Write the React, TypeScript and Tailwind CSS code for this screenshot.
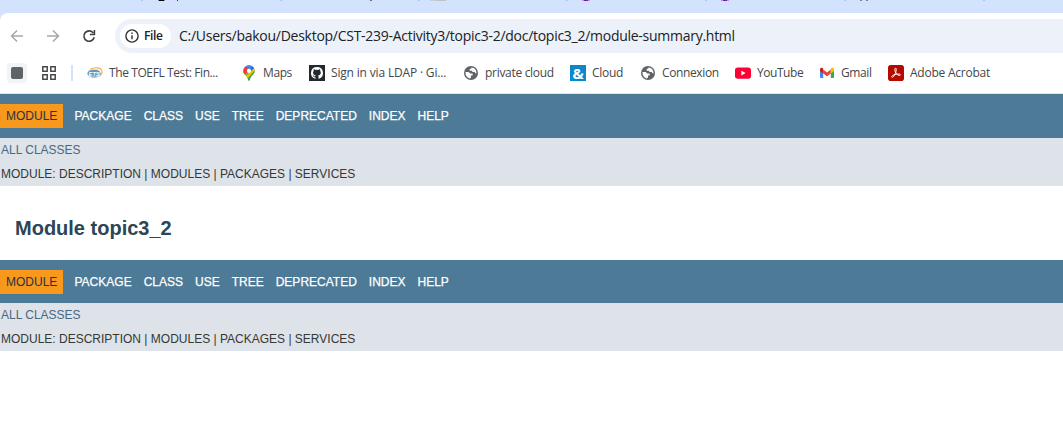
import type { ReactNode } from "react";

const ui = "font-['Open_Sans','Noto_Sans',sans-serif]";

function TabStrip() {
  const marks: [number, number, string][] = [
    [141, 2, "#a8c7fa"], [158, 1, "#8a93a5"], [159, 5, "#000"], [164, 1, "#8a93a5"], [177, 1, "#30343c"],
    [280, 2, "#a8c7fa"], [370, 2, "#6b7078"], [418, 2, "#a8c7fa"], [430, 7, "#c6cedd"], [437, 9, "#bfc1c8"],
    [566, 2, "#a8c7fa"], [582, 2, "#b49bdc"], [584, 4, "#6a1fa8"], [588, 2, "#b49bdc"],
    [705, 2, "#a8c7fa"], [721, 2, "#b49bdc"], [723, 4, "#6a1fa8"], [727, 2, "#b49bdc"],
    [844, 2, "#a8c7fa"], [860, 2, "#7b828e"], [866, 2, "#7b828e"], [983, 2, "#a8c7fa"],
  ];
  return (
    <div className="h-[13px] bg-[#d3e3fd]">
      <svg width="1063" height="1" className="block" shapeRendering="crispEdges">
        {marks.map(([x, w, c]) => <rect key={x} x={x} y="0" width={w} height="1" fill={c} />)}
      </svg>
    </div>
  );
}

function Arrow({ flip = false }: { flip?: boolean }) {
  return (
    <svg width="14" height="14" viewBox="0 0 14 14" fill="none" stroke="#a5a7a9" strokeWidth="1.5" className={flip ? "rotate-180" : ""}>
      <path d="M13 7H1.7M7 1.5 1.5 7 7 12.5" />
    </svg>
  );
}

function Toolbar() {
  return (
    <div className="flex h-[46px] items-center rounded-tl-lg bg-white pl-[10px]">
      <Arrow />
      <div className="ml-[22px] flex"><Arrow flip /></div>
      <svg width="14" height="14" viewBox="0 0 14 14" fill="none" stroke="#3f4144" strokeWidth="1.6" className="ml-[22px]">
        <path d="M11.4 4.1A5.2 5.2 0 1 0 12.2 8.2" />
        <path d="M12.4 1v4.5H7.9" />
      </svg>
      <div className="ml-[19px] flex h-[34px] flex-1 items-center rounded-l-full bg-[#ecf1fa] pl-[5px]">
        <div className="flex h-6 w-[51px] shrink-0 items-center rounded-full bg-white pl-[5px]">
          <svg width="14" height="14" viewBox="0 0 14 14" fill="none" stroke="#303134" strokeWidth="1.4" className="shrink-0">
            <circle cx="7" cy="7" r="6.1" />
            <path d="M7 6.2v4M7 3.6V5" />
          </svg>
          <span className={`${ui} ml-[5px] text-[12px] font-semibold leading-4 tracking-[-0.35px] text-[#202124]`}>File</span>
        </div>
        <span className={`${ui} ml-2 whitespace-nowrap text-[14px] leading-5 tracking-[-0.27px] text-[#202124]`}>
          C:/Users/bakou/Desktop/CST-239-Activity3/topic3-2/doc/topic3_2/module-summary.html
        </span>
      </div>
    </div>
  );
}

const Ets = () => (
  <svg width="16" height="16" viewBox="0 0 16 16">
    <path d="M3 4.5C7 1.8 15 2 15 7c0 2-1.5 3.5-3 4.2" fill="none" stroke="#f4b23c" strokeWidth="1.1" />
    <ellipse cx="7" cy="8.4" rx="6.6" ry="4.5" fill="#5b97c1" />
    <path d="M1 6.2C4 4 10 3.8 13 6M2 11c3 1.6 8 1.6 11-.3" fill="none" stroke="#d9e9f3" strokeWidth="1" />
    <text x="1.6" y="10.5" fontFamily="Liberation Sans" fontSize="5.8" fontWeight="bold" fontStyle="italic" fill="#fff">ETS</text>
  </svg>
);

const MapsPin = () => (
  <svg width="12" height="16" viewBox="0 0 12 16">
    <defs><clipPath id="pin"><path d="M6 .2A5.7 5.7 0 0 0 .3 6c0 3.8 4.3 4.8 4.9 9.2q.8 1.2 1.6 0C7.4 10.8 11.7 9.8 11.7 6A5.7 5.7 0 0 0 6 .2" /></clipPath></defs>
    <g clipPath="url(#pin)">
      <path d="M0 0h12v16H0z" fill="#34a853" />
      <path d="M0 12V4l6 2-4 5z" fill="#fbbc04" />
      <path d="M2 12 12 1v4L5 13z" fill="#fbbc04" />
      <path d="M0 1h4l2.5 4L2.2 9.8 0 8z" fill="#ea4335" />
      <path d="M2 0h10v2.4L7 6z" fill="#4285f4" />
      <path d="m12 1.8-4.6 5L6 5.4 9.6 1z" fill="#1a73e8" />
    </g>
    <circle cx="6" cy="5.8" r="2.1" fill="#fff" />
  </svg>
);

const Github = () => (
  <svg width="16" height="16" viewBox="0 0 16 16">
    <rect width="16" height="16" fill="#24292e" />
    <path d="M8 2a6 6 0 0 0-1.9 11.7c.3.1.4-.1.4-.3v-1.2c-1.7.4-2-.7-2-.7-.3-.7-.7-.9-.7-.9-.5-.4 0-.4 0-.4.6 0 .9.6.9.6.5.9 1.4.7 1.8.5 0-.4.2-.7.4-.8-1.4-.2-2.8-.7-2.8-3 0-.6.2-1.2.6-1.6 0-.2-.3-.8.1-1.6 0 0 .5-.2 1.6.6a6 6 0 0 1 3 0c1.200-.8 1.700-.6 1.700-.6.3.8.1 1.400 0 1.600.4.4.7 1 .7 1.600 0 2.300-1.400 2.800-2.800 3 .3.2.5.6.5 1.200v1.700c0 .2.1.4.4.3A6 6 0 0 0 8 2" fill="#fff" />
  </svg>
);

const Globe = () => (
  <svg width="14" height="14" viewBox="0 0 14 14">
    <circle cx="7" cy="7" r="7" fill="#5f6368" />
    <path d="M1.5 6.1h3.2l1.5 1.3h2.4v2H7v2.1L5.8 12.4C3.3 12 1.5 9.8 1.5 7zM7.3 1.5v1.3H5.7v1.9h2.1l.8 1.4h2.1l.7 1.2h1.1C12.7 4.3 10.7 1.5 7.3 1.5" fill="#fff" />
  </svg>
);

const Ampersand = () => (
  <div className="flex size-4 shrink-0 items-center justify-center bg-[#0b87cc]">
    <span className={`${ui} text-[15px] font-bold leading-4 text-white`}>&amp;</span>
  </div>
);

const Youtube = () => (
  <svg width="16" height="16" viewBox="0 0 16 16">
    <rect y="2.4" width="16" height="11.4" rx="2.8" fill="#ff0033" />
    <path d="m6.4 5.7 4.2 2.4-4.2 2.4z" fill="#fff" />
  </svg>
);

const Gmail = () => (
  <svg width="14" height="12" viewBox="0 0 14 12">
    <path d="M0 2.5 3.2 4v7H1a1 1 0 0 1-1-1z" fill="#4285f4" />
    <path d="M14 2.5 10.8 4v7H13a1 1 0 0 0 1-1z" fill="#34a853" />
    <path d="M3.2 2.6 7 5.4l3.8-2.8v3.9L7 9.3 3.2 6.5z" fill="#ea4335" />
    <path d="M0 2.3C0 .8 1.5.4 2.5 1l.7.6v4.9L0 4.1z" fill="#c5221f" />
    <path d="M14 2.3c0-1.5-1.5-1.9-2.5-1.3l-.7.6v4.9L14 4.1z" fill="#fbbc04" />
  </svg>
);

const Acrobat = () => (
  <svg width="16" height="16" viewBox="0 0 16 16">
    <rect width="16" height="16" rx="2.8" fill="#b30b00" />
    <path d="M7.4 3.2c1.1-.3 1 1.8.6 3.3-.6 2.1-2.2 5.6-3.5 5.8-1 .1-1.1-1 .2-1.8 1.7-1.1 4.8-1.7 6.7-1.4 1.3.2 1.2 1.4.1 1.4C9.4 10.5 7 7.5 6.8 4.9 6.7 4 6.9 3.4 7.4 3.2Z" fill="none" stroke="#fff" strokeWidth=".95" />
  </svg>
);

function Bookmark({ icon, label, className, text }: { icon: ReactNode; label: string; className: string; text: string }) {
  return (
    <div className={`flex shrink-0 items-center ${className}`}>
      {icon}
      <span className={`${ui} whitespace-nowrap text-[12px] leading-4 text-[#45474a] ${text}`}>{label}</span>
    </div>
  );
}

function Bookmarks() {
  return (
    <div className="flex h-[35px] items-center border-b border-[#dfe3e8] bg-white pb-[6px] pl-[7px]">
      <div className="flex size-5 items-center justify-center rounded bg-[#f1f3f4]"><div className="size-3 rounded-[2px] bg-[#5f6368]" /></div>
      <svg width="14" height="14" viewBox="0 0 14 14" fill="none" stroke="#47494d" strokeWidth="1.5" className="ml-[15px]">
        <path d="M.8.8h4.4v4.4H.8zM8.8.8h4.4v4.4H8.8zM.8 8.8h4.4v4.4H.8zM8.8 8.8h4.4v4.4H8.8z" />
      </svg>
      <div className="ml-[15px] mr-[14px] h-4 w-[2px] bg-[#d3e3fd]" />
      <Bookmark icon={<Ets />} label="The TOEFL Test: Fin..." className="w-[156px]" text="ml-[6px] tracking-[-0.4px]" />
      <Bookmark icon={<MapsPin />} label="Maps" className="w-[66px]" text="ml-2 tracking-[-0.4px]" />
      <Bookmark icon={<Github />} label="Sign in via LDAP · Gi..." className="w-[155px]" text="ml-[6px] tracking-[-0.17px]" />
      <Bookmark icon={<Globe />} label="private cloud" className="w-[106px]" text="ml-[7px] tracking-[-0.3px]" />
      <Bookmark icon={<Ampersand />} label="Cloud" className="w-[71px]" text="ml-[6px] tracking-[-0.3px]" />
      <Bookmark icon={<Globe />} label="Connexion" className="w-[94px]" text="ml-[7px] tracking-[-0.38px]" />
      <Bookmark icon={<Youtube />} label="YouTube" className="w-[85px]" text="ml-[6px] tracking-[-0.45px]" />
      <Bookmark icon={<Gmail />} label="Gmail" className="w-[68px]" text="ml-[7px] tracking-[-0.38px]" />
      <Bookmark icon={<Acrobat />} label="Adobe Acrobat" className="" text="ml-[6px] tracking-[-0.23px]" />
    </div>
  );
}

function DocNav({ height }: { height: string }) {
  return (
    <nav className="text-[12px] leading-[14px]">
      <div className={`flex items-start bg-[#4d7a97] pt-[10px] text-white ${height}`}>
        <span className="mr-[11.5px] h-6 w-[63px] bg-[#f8981d] pl-[6px] pt-[5px] text-[#253441]">MODULE</span>
        <div className="flex gap-3 pt-[5px] [-webkit-text-stroke:0.25px_white]">
          {["PACKAGE", "CLASS", "USE", "TREE", "DEPRECATED", "INDEX", "HELP"].map((s) => <a key={s}>{s}</a>)}
        </div>
      </div>
      <div className="h-12 bg-[#dee3e9] pl-px pt-[5px]">
        <div className="text-[#4a6782]">ALL CLASSES</div>
        <div className="mt-[10px] text-[#353833]">MODULE: DESCRIPTION | MODULES | PACKAGES | SERVICES</div>
      </div>
    </nav>
  );
}

export default function App() {
  return (
    <div className="h-[427px] overflow-hidden bg-white font-['Liberation_Sans',Arial,sans-serif]">
      <div className="bg-[#d3e3fd]">
        <TabStrip />
        <Toolbar />
      </div>
      <Bookmarks />
      <DocNav height="h-11" />
      <h1 className="h-[74px] pl-[15px] pt-[30px] text-[20px] font-bold leading-6 text-[#2c4557]">Module topic3_2</h1>
      <DocNav height="h-[43px]" />
    </div>
  );
}
